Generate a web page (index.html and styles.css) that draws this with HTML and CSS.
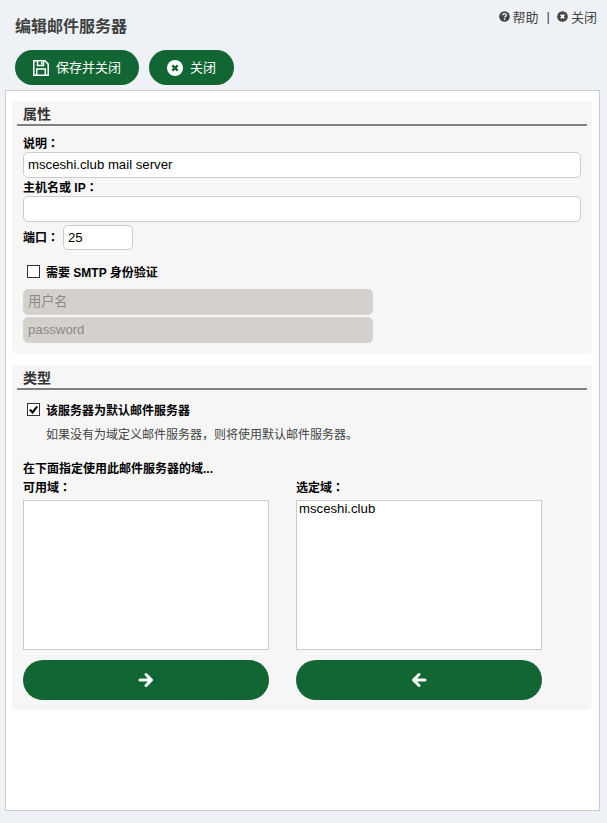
FILE: index.html
```html
<!DOCTYPE html>
<html lang="zh">
<head>
<meta charset="utf-8">
<title>编辑邮件服务器</title>
<link rel="stylesheet" href="styles.css">
</head>
<body>
<header class="top">
  <h1 class="title">编辑邮件服务器</h1>
  <nav class="links">
    <a class="link"><svg class="mini" viewBox="0 0 12 12"><circle cx="6" cy="6" r="5.800" fill="#444"/><path d="M4.200 4.700c0-2.300 3.700-2.300 3.700-.1 0 1.300-1.800 1.300-1.800 2.600" fill="none" stroke="#fff" stroke-width="1.400"/><rect x="5.300" y="8.100" width="1.600" height="1.500" fill="#fff"/></svg>帮助</a>
    <span class="sep">|</span>
    <a class="link"><svg class="mini" viewBox="0 0 12 12"><circle cx="6" cy="6" r="5.800" fill="#444"/><path d="M4 4l4 4M8 4l-4 4" stroke="#fff" stroke-width="1.800"/></svg>关闭</a>
  </nav>
</header>
<div class="toolbar">
  <button class="btn"><svg class="btn-icon" viewBox="0 0 16 16"><path d="M1.700.8h10.200l3.300 3.300v11.100H.8V.8z" fill="none" stroke="#fff" stroke-width="1.500"/><path d="M4.500 1v4.500h6V1M3.700 15V9h8.600v6" fill="none" stroke="#fff" stroke-width="1.500"/><rect x="8" y="2" width="1.500" height="2.500" fill="#fff"/></svg><span class="btn-text">保存并关闭</span></button>
  <button class="btn"><svg class="btn-icon" viewBox="0 0 16 16"><circle cx="8" cy="8" r="8" fill="#fff"/><path d="M5.300 5.300l5.400 5.400M10.700 5.300l-5.400 5.400" stroke="#126633" stroke-width="2.400"/></svg><span class="btn-text">关闭</span></button>
</div>
<main class="panel">
  <section class="group">
    <h2 class="group-title">属性</h2>
    <div class="group-body body-props">
      <label class="label">说明<span class="mid" lang="zh-TW">：</span></label>
      <input class="field" value="msceshi.club mail server">
      <label class="label label-host">主机名或 IP<span class="mid" lang="zh-TW">：</span></label>
      <input class="field">
      <div class="port-row">
        <label class="label">端口<span class="mid" lang="zh-TW">：</span></label>
        <input class="field port" value="25">
      </div>
      <label class="check check-smtp"><span class="box"></span>需要 SMTP 身份验证</label>
      <input class="field muted" placeholder="用户名">
      <input class="field muted" placeholder="password">
    </div>
  </section>
  <section class="group group-type">
    <h2 class="group-title">类型</h2>
    <div class="group-body body-type">
      <label class="check check-default"><span class="box"><svg viewBox="0 0 12 12"><path d="M2 6l3 3.200L10 2.500" fill="none" stroke="#111" stroke-width="2.400"/></svg></span>该服务器为默认邮件服务器</label>
      <p class="hint">如果没有为域定义邮件服务器，则将使用默认邮件服务器。</p>
      <p class="label domains-title">在下面指定使用此邮件服务器的域...</p>
      <div class="columns">
        <div class="col">
          <label class="label">可用域<span class="mid" lang="zh-TW">：</span></label>
          <div class="listbox"></div>
          <button class="btn btn-wide"><svg class="arrow" viewBox="0 0 16 16"><path d="M2 8h11M8 2.500L13.500 8 8 13.500" fill="none" stroke="#fff" stroke-width="3" stroke-linecap="round" stroke-linejoin="round"/></svg></button>
        </div>
        <div class="col">
          <label class="label">选定域<span class="mid" lang="zh-TW">：</span></label>
          <div class="listbox">msceshi.club</div>
          <button class="btn btn-wide"><svg class="arrow" viewBox="0 0 16 16"><path d="M14 8H3M8 2.500L2.500 8 8 13.500" fill="none" stroke="#fff" stroke-width="3" stroke-linecap="round" stroke-linejoin="round"/></svg></button>
        </div>
      </div>
    </div>
  </section>
</main>
</body>
</html>
```
FILE: styles.css
```css
* { box-sizing: border-box; }
html, body { margin: 0; height: 100%; }
body {
  background: #eef1f6;
  color: #000;
  font-family: "Liberation Sans", "Noto Sans CJK SC", sans-serif;
  font-size: 13px;
  padding: 0 7px 12px 5px;
  display: flex;
  flex-direction: column;
  height: 823px;
  overflow: hidden;
}
.top { display: flex; justify-content: space-between; height: 50px; padding-left: 10px; }
.title { margin: 16px 0 0; font-size: 16px; line-height: 22px; font-weight: bold; color: #404040; }
.links { display: flex; align-items: center; height: 16px; margin: 8px 3px 0 0; color: #444; font-size: 13px; }
.link { display: flex; align-items: center; gap: 3px; }
.mini { width: 11px; height: 11px; }
.sep { margin: 0 7px 0 8px; }
.toolbar { display: flex; gap: 10px; height: 40px; padding-left: 10px; }
.btn {
  height: 35px;
  border: 0;
  border-radius: 18px;
  background: #126633;
  color: #fff;
  font: 13px "Liberation Sans", "Noto Sans CJK SC", sans-serif;
  padding: 0 18px;
  display: flex;
  align-items: center;
  gap: 7px;
}
.btn-text { margin-bottom: 2px; }
.btn-icon { width: 16px; height: 16px; }
.panel {
  flex: 1;
  background: #fff;
  border: 1px solid #ccc;
  padding: 10px 7px 0 6px;
}
.group { background: #f6f6f6; border-radius: 5px; padding: 0 5px; }
.group-type { margin-top: 11px; }
.group-title {
  margin: 0;
  height: 25px;
  padding-left: 6px;
  border-bottom: 2px solid #808080;
  font-size: 14px;
  line-height: 26px;
  font-weight: bold;
  color: #333;
}
.group-body { padding: 0 6px; }
.body-props { padding-bottom: 9px; }
.body-type { padding-bottom: 10px; }
.label { display: block; font-size: 12px; font-weight: bold; line-height: 16px; margin: 0; }
.mid { font-family: "Noto Sans CJK TC", sans-serif; line-height: 0; }
.group-body > .label:first-child { margin-top: 10px; }
.field {
  display: block;
  width: 100%;
  height: 26px;
  border: 1px solid #ccc;
  border-radius: 5px;
  background: #fff;
  padding: 0 4px 1px;
  font: 13.2px "Liberation Sans", "Noto Sans CJK SC", sans-serif;
  color: #000;
}
.label-host { margin-top: 2px; }
.port-row { display: flex; align-items: center; gap: 4px; margin-top: 3px; }
.port-row .label { white-space: nowrap; }
.port { width: 70px; height: 25px; }
.check { display: flex; align-items: center; font-size: 12px; font-weight: bold; padding-left: 4px; gap: 6px; color: #000; }
.check-smtp { margin: 13px 0 10px; height: 16px; }
.box { width: 13px; height: 13px; border: 1px solid #333; background: #fff; display: block; }
.box svg { display: block; width: 11px; height: 11px; }
.muted { width: 350px; height: 26px; background: #d4d1cc; border-color: #d8d5d1; margin-bottom: 2px; }
.muted::placeholder { color: #8a8a8a; opacity: 1; }
.check-default { margin-top: 11px; height: 16px; }
.hint { margin: 10px 0 0 23px; font-size: 12px; line-height: 16px; color: #444; }
.domains-title { margin-top: 18px; }
.columns { display: flex; gap: 27px; margin-top: 3px; }
.col { width: 246px; }
.listbox {
  height: 150px;
  border: 1px solid #ccc;
  background: #fff;
  margin-top: 4px;
  padding: 0 2px;
  font-size: 13.2px;
  line-height: 15px;
}
.btn-wide { width: 100%; height: 40px; border-radius: 20px; justify-content: center; margin-top: 10px; padding: 0; }
.arrow { width: 16px; height: 16px; }
```
